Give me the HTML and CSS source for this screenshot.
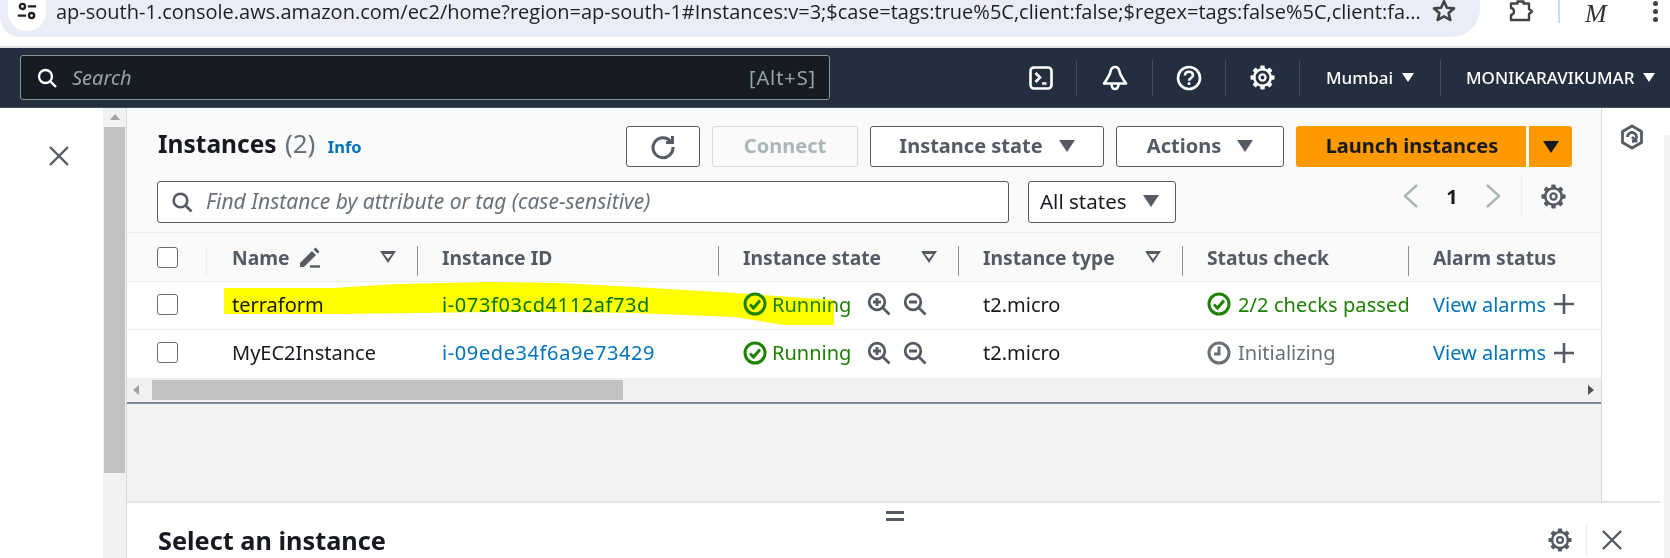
FILE: index.html
```html
<!DOCTYPE html>
<html lang="en">
<head>
    <meta charset="UTF-8">
    <meta name="viewport" content="width=device-width, initial-scale=1.0">
    <title>Instances | EC2 | ap-south-1</title>
    <link rel="stylesheet" href="styles.css">
</head>
<body>
    <!-- shared cog icon -->
    <svg class="icon-defs">
        <symbol id="gear" viewBox="0 0 26 26">
            <g fill="currentColor">
                <rect x="10.700" y="0.500" width="4.600" height="5" rx="1"/>
                <rect x="10.700" y="0.500" width="4.600" height="5" rx="1" transform="rotate(45 13 13)"/>
                <rect x="10.700" y="0.500" width="4.600" height="5" rx="1" transform="rotate(90 13 13)"/>
                <rect x="10.700" y="0.500" width="4.600" height="5" rx="1" transform="rotate(135 13 13)"/>
                <rect x="10.700" y="0.500" width="4.600" height="5" rx="1" transform="rotate(180 13 13)"/>
                <rect x="10.700" y="0.500" width="4.600" height="5" rx="1" transform="rotate(225 13 13)"/>
                <rect x="10.700" y="0.500" width="4.600" height="5" rx="1" transform="rotate(270 13 13)"/>
                <rect x="10.700" y="0.500" width="4.600" height="5" rx="1" transform="rotate(315 13 13)"/>
            </g>
            <circle cx="13" cy="13" r="8.600" fill="none" stroke="currentColor" stroke-width="2.600"/>
            <circle cx="13" cy="13" r="3.200" fill="none" stroke="currentColor" stroke-width="2.400"/>
        </symbol>
    </svg>

    <!-- browser address bar -->
    <div class="chrome-bar">
        <div class="address-pill">
            <span class="site-icon">
                <svg width="22" height="22" viewBox="0 0 24 24" fill="none" stroke="#1f1f1f" stroke-width="2.600"><circle cx="7" cy="7" r="2.800"/><path d="M13 7h9M2 17h9"/><circle cx="17" cy="17" r="2.800"/></svg>
            </span>
            <span class="url">ap-south-1.console.aws.amazon.com/ec2/home?region=ap-south-1#Instances:v=3;$case=tags:true%5C,client:false;$regex=tags:false%5C,client:fa...</span>
            <svg class="star" width="26" height="26" viewBox="0 0 24 24" fill="none" stroke="#444" stroke-width="2.400" stroke-linejoin="round"><path d="M12 3l2.700 6 6.500.6-4.900 4.300 1.500 6.400L12 17l-5.800 3.300 1.500-6.400-4.900-4.300 6.500-.6z"/></svg>
        </div>
        <div class="chrome-tools">
            <svg class="ext-icon" width="25" height="23" viewBox="0 0 25 23" fill="none" stroke="#444" stroke-width="2.400" stroke-linejoin="round"><path d="M2 3.500h6.500V1.500h6v2H20v5.500l3 2.500-3 2.500v6H2v-5c2.500-.5 3-2 3-3.500s-.5-3-3-3.500z"/></svg>
            <span class="tool-divider"></span>
            <span class="avatar">M</span>
            <span class="dots"><i></i><i></i><i></i></span>
        </div>
    </div>

    <!-- console nav -->
    <nav class="topnav">
        <div class="nav-search">
            <svg width="22" height="22" viewBox="0 0 22 22" fill="none" stroke="#fff" stroke-width="2.400"><circle cx="9.500" cy="9.500" r="6.500"/><path d="M14 14l6 6"/></svg>
            <span class="nav-search-text">Search</span>
            <span class="nav-shortcut">[Alt+S]</span>
        </div>
        <div class="nav-right">
            <div class="nav-item nav-terminal">
                <svg width="24" height="24" viewBox="0 0 24 24" fill="none" stroke="#fff" stroke-width="2.600"><rect x="1.500" y="1.500" width="21" height="21" rx="3.500"/><path d="M6.500 7l4.500 4.500L6.500 16M13 17.500h4.500"/></svg>
            </div>
            <div class="nav-item nav-bell">
                <svg width="26" height="26" viewBox="0 0 26 26" fill="none" stroke="#fff" stroke-width="2.600" stroke-linejoin="round"><path d="M13 2c-2.500 0-4 2-4.500 4.500C8 10 5 14 2 18.500h22C21 14 18 10 17.500 6.500 17 4 15.500 2 13 2z"/><path d="M9.500 19c0 3 1.500 5 3.500 5s3.500-2 3.500-5"/></svg>
            </div>
            <div class="nav-item nav-help">
                <svg width="26" height="26" viewBox="0 0 26 26" fill="none" stroke="#fff" stroke-width="2.600"><circle cx="13" cy="13" r="11"/><path d="M9 10.500C9 8 10.800 6.700 13 6.700s4 1.300 4 3.300c0 3-4 3-4 5.800"/><path d="M13 17.300v2.700"/></svg>
            </div>
            <div class="nav-item nav-gear">
                <svg class="gear-white" width="25" height="25"><use href="#gear"/></svg>
            </div>
            <div class="nav-item text-item region">Mumbai <span class="caret-white"></span></div>
            <div class="nav-item text-item account">MONIKARAVIKUMAR <span class="caret-white"></span></div>
        </div>
    </nav>

    <div class="workspace">
        <aside class="side-nav">
            <svg width="24" height="24" viewBox="0 0 24 24" fill="none" stroke="#545b64" stroke-width="2.400"><path d="M3 3l18 18M21 3L3 21"/></svg>
        </aside>
        <div class="page-scroll">
            <span class="scroll-up"></span>
            <div class="page-thumb"></div>
        </div>

        <div class="center">
            <div class="upper">
                <section class="instances">
                    <div class="toolbar">
                        <h1 class="title">Instances <span class="count">(2)</span> <a class="info">Info</a></h1>
                        <div class="actions">
                            <button class="btn btn-refresh">
                                <svg width="26" height="26" viewBox="0 0 26 26" fill="none" stroke="#545b64" stroke-width="3"><path d="M20.500 7A10 10 0 1 0 23 13"/><path d="M22.500 2v6.500H16" stroke-linejoin="miter"/></svg>
                            </button>
                            <button class="btn btn-connect">Connect</button>
                            <button class="btn btn-state">Instance state <span class="caret"></span></button>
                            <button class="btn btn-actions">Actions <span class="caret"></span></button>
                            <div class="launch">
                                <button class="btn-launch">Launch instances</button>
                                <button class="btn-launch-caret"><span class="caret caret-dark"></span></button>
                            </div>
                        </div>
                    </div>

                    <div class="filters">
                        <div class="find">
                            <svg width="22" height="22" viewBox="0 0 22 22" fill="none" stroke="#545b64" stroke-width="2.600"><circle cx="9.500" cy="9.500" r="6.800"/><path d="M14.500 14.500l6 6"/></svg>
                            <span class="find-text">Find Instance by attribute or tag (case-sensitive)</span>
                        </div>
                        <div class="select-states">All states <span class="caret"></span></div>
                        <div class="pager">
                            <svg width="18" height="26" viewBox="0 0 18 26" fill="none" stroke="#aab7b8" stroke-width="2.400"><path d="M15 2L3 13l12 11"/></svg>
                            <span class="page-num">1</span>
                            <svg width="18" height="26" viewBox="0 0 18 26" fill="none" stroke="#aab7b8" stroke-width="2.400"><path d="M3 2l12 11L3 24"/></svg>
                            <span class="pager-divider"></span>
                            <svg class="pager-gear" width="25" height="25"><use href="#gear"/></svg>
                        </div>
                    </div>

                    <div class="table-wrap">
                        <div class="row head">
                            <div class="cell c-check first-sep"><span class="checkbox"></span></div>
                            <div class="cell c-name">Name
                                <svg class="pencil" width="22" height="22" viewBox="0 0 22 22"><path d="M1 17L13 5l4 4L5 21H1z" fill="#545b64"/><path d="M14.500 3.500L16.500 1.500l4 4-2 2z" fill="#545b64"/><path d="M11 20.500h10" stroke="#545b64" stroke-width="2.400"/></svg>
                                <span class="filter-caret"></span></div>
                            <div class="cell c-id sep">Instance ID</div>
                            <div class="cell c-state sep">Instance state <span class="filter-caret"></span></div>
                            <div class="cell c-type sep">Instance type <span class="filter-caret"></span></div>
                            <div class="cell c-status sep">Status check</div>
                            <div class="cell c-alarm sep">Alarm status</div>
                        </div>

                        <div class="row body-row">
                            <div class="cell c-check"><span class="checkbox"></span></div>
                            <div class="cell c-name">terraform</div>
                            <div class="cell c-id"><a class="link id-link">i-073f03cd4112af73d</a></div>
                            <div class="cell c-state">
                                <svg class="status-icon" width="24" height="24" viewBox="0 0 24 24" fill="none" stroke="#1d8102" stroke-width="3"><circle cx="12" cy="12" r="10"/><path d="M7 12.500l3.500 3.500L17 8.500"/></svg>
                                <span class="ok">Running</span>
                                <span class="zooms">
                                    <svg width="24" height="24" viewBox="0 0 24 24" fill="none" stroke="#545b64" stroke-width="2.800"><circle cx="10" cy="10" r="7.800"/><path d="M15.500 15.500l7 7M6 10h8M10 6v8"/></svg>
                                    <svg width="24" height="24" viewBox="0 0 24 24" fill="none" stroke="#545b64" stroke-width="2.800"><circle cx="10" cy="10" r="7.800"/><path d="M15.500 15.500l7 7M6 10h8"/></svg>
                                </span>
                            </div>
                            <div class="cell c-type">t2.micro</div>
                            <div class="cell c-status">
                                <svg class="status-icon" width="24" height="24" viewBox="0 0 24 24" fill="none" stroke="#1d8102" stroke-width="3"><circle cx="12" cy="12" r="10"/><path d="M7 12.500l3.500 3.500L17 8.500"/></svg>
                                <span class="ok">2/2 checks passed</span>
                            </div>
                            <div class="cell c-alarm"><a class="link">View alarms</a>
                                <svg class="plus" width="22" height="22" viewBox="0 0 22 22" stroke="#545b64" stroke-width="2.600"><path d="M11 1v20M1 11h20"/></svg>
                            </div>
                        </div>

                        <div class="row body-row">
                            <div class="cell c-check"><span class="checkbox"></span></div>
                            <div class="cell c-name">MyEC2Instance</div>
                            <div class="cell c-id"><a class="link id-link">i-09ede34f6a9e73429</a></div>
                            <div class="cell c-state">
                                <svg class="status-icon" width="24" height="24" viewBox="0 0 24 24" fill="none" stroke="#1d8102" stroke-width="3"><circle cx="12" cy="12" r="10"/><path d="M7 12.500l3.500 3.500L17 8.500"/></svg>
                                <span class="ok">Running</span>
                                <span class="zooms">
                                    <svg width="24" height="24" viewBox="0 0 24 24" fill="none" stroke="#545b64" stroke-width="2.800"><circle cx="10" cy="10" r="7.800"/><path d="M15.500 15.500l7 7M6 10h8M10 6v8"/></svg>
                                    <svg width="24" height="24" viewBox="0 0 24 24" fill="none" stroke="#545b64" stroke-width="2.800"><circle cx="10" cy="10" r="7.800"/><path d="M15.500 15.500l7 7M6 10h8"/></svg>
                                </span>
                            </div>
                            <div class="cell c-type">t2.micro</div>
                            <div class="cell c-status">
                                <svg class="status-icon" width="24" height="24" viewBox="0 0 24 24" fill="none" stroke="#687078" stroke-width="3"><circle cx="12" cy="12" r="10"/><path d="M12 5.500V13H7"/></svg>
                                <span class="pending">Initializing</span>
                            </div>
                            <div class="cell c-alarm"><a class="link">View alarms</a>
                                <svg class="plus" width="22" height="22" viewBox="0 0 22 22" stroke="#545b64" stroke-width="2.600"><path d="M11 1v20M1 11h20"/></svg>
                            </div>
                        </div>

                        <!-- marker stroke drawn over the first row -->
                        <svg class="marker" width="620" height="50" viewBox="0 0 620 50">
                            <path d="M0 6 L110 6 L173 2 L265 0 L335 1 L410 5 L511 11 L610 18 L610 43 L560 43 L511 35 L410 31 L335 30 L265 30 L115 32 L0 32 Z" fill="#ffff00"/>
                        </svg>
                    </div>

                    <div class="h-scroll">
                        <span class="arrow-left"></span>
                        <div class="h-thumb"></div>
                        <span class="arrow-right"></span>
                    </div>
                    <div class="empty-area"></div>
                </section>

                <aside class="rail">
                    <svg width="24" height="26" viewBox="0 0 24 26" fill="none" stroke="#545b64" stroke-width="2.800" stroke-linejoin="round"><path d="M12 2l9.500 5.500v11L12 24l-9.500-5.500v-11z"/><path d="M7.500 13a4.500 4.500 0 1 1 4.500 4.500"/><path d="M12 13l5 5"/></svg>
                </aside>
            </div>

            <section class="split-panel">
                <div class="split-handle"><i></i><i></i></div>
                <div class="split-head">
                    <h2 class="split-title">Select an instance</h2>
                    <div class="split-tools">
                        <svg class="pager-gear-plain" width="24" height="24"><use href="#gear"/></svg>
                        <span class="split-divider"></span>
                        <svg width="22" height="22" viewBox="0 0 22 22" fill="none" stroke="#545b64" stroke-width="2.400"><path d="M2 2l18 18M20 2L2 20"/></svg>
                    </div>
                </div>
            </section>
        </div>

        <div class="outer-scroll"></div>
    </div>
</body>
</html>
```

FILE: styles.css
```css
* {
    margin: 0;
    padding: 0;
    box-sizing: border-box;
}

html, body {
    height: 558px;
    overflow: hidden;
}

body {
    font-family: "Noto Sans", "Open Sans", sans-serif;
    background-color: #fff;
    color: #16191f;
    display: flex;
    flex-direction: column;
}

.icon-defs {
    display: none;
}

/* browser bar */
.chrome-bar {
    height: 48px;
    flex: none;
    display: flex;
    background-color: #fff;
    border-bottom: 2px solid #e3e3e3;
}

.address-pill {
    width: 1480px;
    height: 37px;
    background-color: #e9edf7;
    border-radius: 0 0 28px 20px;
    display: flex;
    align-items: center;
    padding: 0 0 15px 8px;
}

.site-icon {
    width: 38px;
    height: 31px;
    background-color: #fff;
    border-radius: 0 0 19px 19px;
    display: flex;
    align-items: center;
    justify-content: center;
    flex: none;
    align-self: flex-start;
    padding-bottom: 9px;
}

.url {
    font-family: "Open Sans", sans-serif;
    font-size: 20px;
    color: #1f1f1f;
    margin-left: 10px;
    white-space: nowrap;
    flex: 1;
}

.star {
    margin-right: 23px;
    flex: none;
}

.chrome-tools {
    flex: 1;
    display: flex;
    align-items: flex-start;
    height: 37px;
    padding-left: 29px;
}

.ext-icon {
    flex: none;
}

.tool-divider {
    width: 2px;
    height: 23px;
    background-color: #c6dcf8;
    margin-left: 24px;
}

.avatar {
    font-family: "Liberation Serif", serif;
    font-style: italic;
    font-size: 26px;
    line-height: 28px;
    width: 28px;
    color: #333;
    margin-left: 25px;
}

.dots {
    display: flex;
    flex-direction: column;
    gap: 3px;
    margin: 1px 0 0 40px;
}

.dots i {
    display: block;
    width: 5px;
    height: 5px;
    border-radius: 50%;
    background-color: #444;
}

/* console nav */
.topnav {
    height: 60px;
    flex: none;
    background-color: #232f3e;
    border-bottom: 1px solid #414d5c;
    display: flex;
    align-items: center;
    padding-left: 20px;
    color: #fff;
}

.nav-search {
    width: 810px;
    height: 45px;
    background-color: #161b24;
    border: 1px solid #879596;
    border-radius: 3px;
    display: flex;
    align-items: center;
    padding: 0 13px 0 15px;
}

.nav-search-text {
    font-style: italic;
    font-size: 20px;
    color: #95a5a6;
    margin-left: 14px;
    flex: 1;
}

.nav-shortcut {
    font-size: 20px;
    letter-spacing: 0.9px;
    color: #95a5a6;
}

.nav-right {
    display: flex;
    align-items: center;
    margin-left: 175px;
    height: 36px;
}

.nav-item {
    height: 36px;
    display: flex;
    align-items: center;
    justify-content: center;
    border-right: 1px solid #414d5c;
}

.nav-terminal {
    width: 72px;
}

.nav-bell {
    width: 76px;
}

.nav-help {
    width: 73px;
}

.nav-gear {
    width: 74px;
}

.gear-white {
    color: #fff;
}

.text-item {
    font-size: 17px;
    font-weight: 500;
    gap: 9px;
}

.region {
    width: 141px;
}

.account {
    border-right: none;
    padding-left: 25px;
    white-space: nowrap;
}

.caret-white {
    width: 0;
    height: 0;
    border-left: 6px solid transparent;
    border-right: 6px solid transparent;
    border-top: 9px solid #fff;
}

/* page area */
.workspace {
    flex: 1;
    display: flex;
    min-height: 0;
}

.side-nav {
    width: 103px;
    flex: none;
    padding: 36px 0 0 47px;
}

.page-scroll {
    width: 24px;
    flex: none;
    background-color: #f1f1f1;
    border-right: 1px solid #d5dbdb;
    padding: 1px 1px 0;
}

.scroll-up {
    display: block;
    width: 0;
    height: 0;
    margin: 5px auto 7px;
    border-left: 5px solid transparent;
    border-right: 5px solid transparent;
    border-bottom: 6px solid #a3a3a3;
}

.page-thumb {
    height: 346px;
    background-color: #c1c1c1;
}

.center {
    flex: 1;
    display: flex;
    flex-direction: column;
    min-width: 0;
}

.outer-scroll {
    width: 6px;
    flex: none;
    margin-top: 27px;
    background-color: #f3f3f3;
}

.upper {
    height: 393px;
    flex: none;
    display: flex;
}

.instances {
    width: 1475px;
    flex: none;
    background-color: #f2f3f3;
    border-right: 1px solid #d5dbdb;
    display: flex;
    flex-direction: column;
}

.toolbar {
    height: 73px;
    background-color: #fafafa;
    padding: 18px 29px 0 31px;
    display: flex;
    justify-content: space-between;
}

.title {
    font-size: 24.500px;
    font-weight: 700;
    line-height: 34px;
    white-space: nowrap;
}

.count {
    font-size: 26px;
    font-weight: 400;
    color: #687078;
    margin-left: 2px;
}

.info {
    font-size: 16.500px;
    font-weight: 700;
    color: #0073bb;
    margin-left: 6px;
}

.actions {
    display: flex;
    gap: 12px;
    height: 41px;
}

.btn {
    font-family: inherit;
    font-size: 20px;
    font-weight: 700;
    color: #545b64;
    background-color: #fff;
    border: 1px solid #545b64;
    border-radius: 3px;
    display: flex;
    align-items: center;
    justify-content: center;
    gap: 16px;
    padding-bottom: 2px;
}

.btn-refresh {
    width: 74px;
    padding-bottom: 0;
}

.btn-connect {
    width: 146px;
    color: #aab7b8;
    border-color: #d5dbdb;
    background-color: #fafafa;
}

.btn-state {
    width: 234px;
}

.btn-actions {
    width: 168px;
}

.caret {
    display: inline-block;
    width: 0;
    height: 0;
    border-left: 8px solid transparent;
    border-right: 8px solid transparent;
    border-top: 12px solid #545b64;
}

.caret-dark {
    border-top-color: #16191f;
}

.launch {
    display: flex;
    gap: 3px;
}

.btn-launch, .btn-launch-caret {
    font-family: inherit;
    font-size: 20px;
    font-weight: 700;
    color: #16191f;
    background-color: #ff9900;
    border: none;
    display: flex;
    align-items: center;
    justify-content: center;
}

.btn-launch {
    width: 230px;
    border-radius: 3px 0 0 3px;
    padding: 0 0 2px 2px;
}

.btn-launch-caret {
    width: 43px;
    border-radius: 0 3px 3px 0;
}

.filters {
    height: 86px;
    flex: none;
    background-color: #fafafa;
    padding: 0 28px 0 30px;
    display: flex;
    align-items: flex-start;
}

.find {
    width: 852px;
    height: 42px;
    background-color: #fff;
    border: 1px solid #545b64;
    border-radius: 3px;
    display: flex;
    align-items: center;
    padding-left: 13px;
}

.find-text {
    font-style: italic;
    font-size: 21px;
    color: #687078;
    margin: 0 0 2px 13px;
    white-space: nowrap;
}

.select-states {
    width: 148px;
    height: 42px;
    margin-left: 19px;
    background-color: #fff;
    border: 1px solid #545b64;
    border-radius: 3px;
    font-size: 20.500px;
    color: #16191f;
    display: flex;
    align-items: center;
    justify-content: space-between;
    padding: 0 16px 2px 11px;
}

.pager {
    flex: 1;
    display: flex;
    align-items: center;
    height: 42px;
    margin-top: -6px;
    padding-left: 226px;
}

.page-num {
    font-size: 20px;
    font-weight: 700;
    width: 64px;
    text-align: center;
}

.pager-divider {
    width: 1px;
    height: 42px;
    background-color: #eaeded;
    margin-left: 19px;
}

.pager-gear {
    margin-left: 19px;
    color: #545b64;
}

.pager-gear-plain {
    color: #545b64;
}

.table-wrap {
    position: relative;
    background-color: #fff;
    flex: none;
    margin-top: -35px;
    border-top: 1px solid #eaeded;
}

.row {
    display: flex;
    align-items: center;
    height: 48px;
    font-size: 20px;
    border-bottom: 1px solid #eaeded;
    white-space: nowrap;
}

.row.head {
    height: 49px;
    background-color: #fafafa;
    font-size: 19.300px;
    font-weight: 700;
    color: #545b64;
}

.row.body-row:last-of-type {
    border-bottom: none;
}

.cell {
    height: 100%;
    display: flex;
    align-items: center;
    flex: none;
    position: relative;
    overflow: hidden;
}

.body-row .cell {
    padding-bottom: 3px;
}

.c-check {
    width: 80px;
    padding-left: 30px;
}

.c-name {
    width: 210px;
    padding-left: 25px;
}

.c-id {
    width: 301px;
    padding-left: 25px;
}

.c-state {
    width: 240px;
    padding-left: 25px;
}

.c-type {
    width: 224px;
    padding-left: 25px;
}

.c-status {
    width: 226px;
    padding-left: 25px;
}

.c-alarm {
    flex: 1;
    padding-left: 25px;
}

/* header column separators */
.sep::before,
.first-sep::after {
    content: "";
    position: absolute;
    top: 13px;
    height: 30px;
    width: 1px;
    background-color: #879596;
}

.sep::before {
    left: 0;
}

.first-sep::after {
    right: 0;
    background-color: #eaeded;
}

.checkbox {
    width: 21px;
    height: 21px;
    background-color: #fff;
    border: 1.500px solid #687078;
    border-radius: 3px;
}

.pencil {
    margin-left: 9px;
    flex: none;
}

.filter-caret {
    position: absolute;
    right: 21px;
    width: 16px;
    height: 12px;
    clip-path: polygon(0 0, 100% 0, 50% 100%);
    background-color: #545b64;
}

.filter-caret::after {
    content: "";
    position: absolute;
    left: 4px;
    top: 3px;
    width: 8px;
    height: 5px;
    clip-path: polygon(0 0, 100% 0, 50% 100%);
    background-color: #fafafa;
}

.link {
    color: #0073bb;
}

.id-link {
    letter-spacing: 0.6px;
}

.ok {
    color: #1d8102;
}

.pending {
    color: #687078;
}

.status-icon {
    flex: none;
    margin-right: 5px;
}

.c-status .status-icon {
    margin-right: 7px;
}

.c-status .ok {
    letter-spacing: 0.1px;
}

.zooms {
    display: flex;
    gap: 12px;
    margin-left: 16px;
}

.plus {
    margin-left: 7px;
    flex: none;
}

.marker {
    position: absolute;
    left: 97px;
    top: 49px;
    mix-blend-mode: multiply;
    pointer-events: none;
}

.h-scroll {
    height: 26px;
    flex: none;
    background-color: #f1f1f1;
    border-bottom: 2px solid #7d8998;
    display: flex;
    align-items: center;
    padding-left: 6px;
}

.arrow-left {
    width: 0;
    height: 0;
    border-top: 5px solid transparent;
    border-bottom: 5px solid transparent;
    border-right: 6px solid #a3a3a3;
}

.h-thumb {
    width: 471px;
    height: 20px;
    margin-left: 13px;
    background-color: #c1c1c1;
}

.arrow-right {
    width: 0;
    height: 0;
    margin-left: auto;
    margin-right: 7px;
    border-top: 5px solid transparent;
    border-bottom: 5px solid transparent;
    border-left: 6px solid #505050;
}

.empty-area {
    flex: 1;
}

.rail {
    flex: 1;
    display: flex;
    justify-content: center;
    align-items: flex-start;
    padding: 16px 2px 0 0;
}

/* bottom split panel */
.split-panel {
    flex: 1;
    margin-right: 4px;
    background-color: #fff;
    border-top: 2px solid #e3e5e5;
    padding: 8px 0 0 31px;
    min-height: 0;
}

.split-handle {
    display: flex;
    flex-direction: column;
    gap: 4px;
    width: 18px;
    margin-left: 728px;
}

.split-handle i {
    display: block;
    height: 3px;
    background-color: #545b64;
}

.split-head {
    display: flex;
    justify-content: space-between;
    align-items: center;
    margin-top: 3px;
}

.split-title {
    font-size: 25.300px;
    font-weight: 700;
    line-height: 32px;
}

.split-tools {
    display: flex;
    align-items: center;
    gap: 14px;
    padding-right: 37px;
}

.split-divider {
    width: 1px;
    height: 32px;
    background-color: #eaeded;
}
```
